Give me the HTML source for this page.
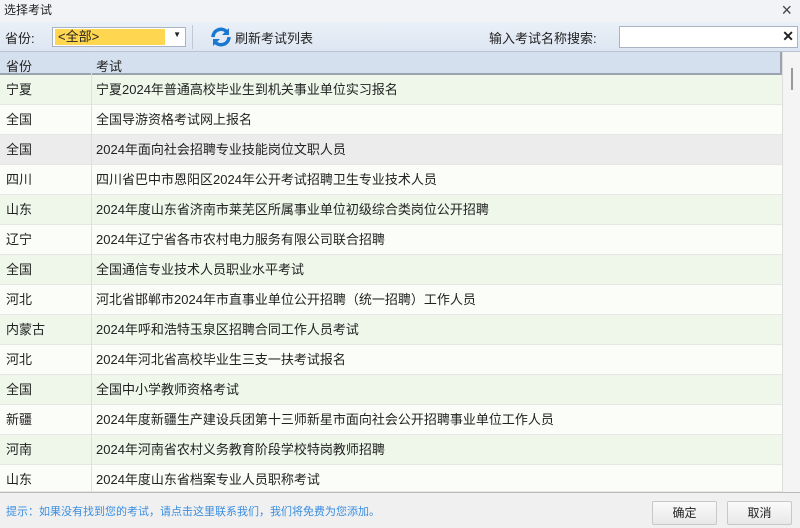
<!DOCTYPE html>
<html><head><meta charset="utf-8"><style>
*{margin:0;padding:0;box-sizing:border-box}
body{width:800px;height:528px;overflow:hidden;background:#f0f0f0;font-family:"Liberation Sans","Noto Sans CJK SC",sans-serif;font-size:13px;color:#222;position:relative}
.title{position:absolute;left:0;top:0;width:800px;height:22px;background:#f2f3f7;font-size:12px;line-height:20px;padding-left:4px}
.close{position:absolute;right:8px;top:0px;font-size:18px;color:#444;font-weight:300}
.tb{position:absolute;left:0;top:22px;width:800px;height:30px;background:linear-gradient(#eaf0f8,#dde6f2);border-bottom:1px solid #b8c4d4}
.abs{position:absolute}
.combo{left:52px;top:5px;width:134px;height:20px;border:1px solid #a8b4c4;background:#fff}
.combo .sel{position:absolute;left:2px;top:1px;width:110px;height:16px;background:#ffd64f;font-size:13px;line-height:16px;padding-left:3px}
.search{left:619px;top:4px;width:179px;height:22px;border:1px solid #a8b4c4;background:#fff}
.hdr{position:absolute;left:0;top:52px;width:782px;height:23px;background:#d5e0ef;border-bottom:2px solid #9aa4b0;border-right:2px solid #9aa4b0}
.row{position:absolute;left:0;width:782px;height:30px;border-bottom:1px solid #e6e6e6;line-height:29px;font-size:13px}
.c1{position:absolute;left:6px}
.c2{position:absolute;left:96px}
.div{position:absolute;left:91px;top:52px;width:1px;height:440px;background:#e0e0e0}
.sb{position:absolute;left:782px;top:52px;width:18px;height:440px;background:#f4f4f4;border-left:1px solid #ddd}
.foot{position:absolute;left:0;top:492px;width:800px;height:36px;background:#f0f0f0;border-top:1px solid #bbb}
.btn{position:absolute;top:8px;width:65px;height:24px;border:1px solid #c8c8c8;background:linear-gradient(#fafafa,#e8e8e8);text-align:center;line-height:22px;font-size:12px;border-radius:2px}
</style></head><body>
<div class="title">选择考试<span class="close">×</span></div>
<div class="tb">
 <div class="abs" style="left:5px;top:6px">省份:</div>
 <div class="abs combo"><div class="sel">&lt;全部&gt;</div><span class="abs" style="right:4px;top:2px;font-size:8px">▼</span></div>
 <div class="abs" style="left:192px;top:3px;width:1px;height:24px;background:#c0c8d4"></div>
 <svg class="abs" style="left:210px;top:4px" width="22" height="22" viewBox="0 0 22 22"><path d="M3 11a8 8 0 0 1 14-5" fill="none" stroke="#1a78d0" stroke-width="3.5"/><path d="M19 2v7h-7z" fill="#1a78d0"/><path d="M19 11a8 8 0 0 1-14 5" fill="none" stroke="#1a78d0" stroke-width="3.5"/><path d="M3 20v-7h7z" fill="#1a78d0"/></svg>
 <div class="abs" style="left:235px;top:6px">刷新考试列表</div>
 <div class="abs" style="left:489px;top:6px">输入考试名称搜索:</div>
 <div class="abs search"><span class="abs" style="right:3px;top:1px;font-weight:bold;font-size:14px">✕</span></div>
</div>
<div class="hdr"><span class="c1" style="top:4px">省份</span><span class="c2" style="top:4px">考试</span></div>
<div class="row" style="top:75px;background:#eef7e9"><span class="c1">宁夏</span><span class="c2">宁夏2024年普通高校毕业生到机关事业单位实习报名</span></div>
<div class="row" style="top:105px;background:#fbfdf9"><span class="c1">全国</span><span class="c2">全国导游资格考试网上报名</span></div>
<div class="row" style="top:135px;background:#ececec"><span class="c1">全国</span><span class="c2">2024年面向社会招聘专业技能岗位文职人员</span></div>
<div class="row" style="top:165px;background:#fbfdf9"><span class="c1">四川</span><span class="c2">四川省巴中市恩阳区2024年公开考试招聘卫生专业技术人员</span></div>
<div class="row" style="top:195px;background:#eef7e9"><span class="c1">山东</span><span class="c2">2024年度山东省济南市莱芜区所属事业单位初级综合类岗位公开招聘</span></div>
<div class="row" style="top:225px;background:#fbfdf9"><span class="c1">辽宁</span><span class="c2">2024年辽宁省各市农村电力服务有限公司联合招聘</span></div>
<div class="row" style="top:255px;background:#eef7e9"><span class="c1">全国</span><span class="c2">全国通信专业技术人员职业水平考试</span></div>
<div class="row" style="top:285px;background:#fbfdf9"><span class="c1">河北</span><span class="c2">河北省邯郸市2024年市直事业单位公开招聘（统一招聘）工作人员</span></div>
<div class="row" style="top:315px;background:#eef7e9"><span class="c1">内蒙古</span><span class="c2">2024年呼和浩特玉泉区招聘合同工作人员考试</span></div>
<div class="row" style="top:345px;background:#fbfdf9"><span class="c1">河北</span><span class="c2">2024年河北省高校毕业生三支一扶考试报名</span></div>
<div class="row" style="top:375px;background:#eef7e9"><span class="c1">全国</span><span class="c2">全国中小学教师资格考试</span></div>
<div class="row" style="top:405px;background:#fbfdf9"><span class="c1">新疆</span><span class="c2">2024年度新疆生产建设兵团第十三师新星市面向社会公开招聘事业单位工作人员</span></div>
<div class="row" style="top:435px;background:#eef7e9"><span class="c1">河南</span><span class="c2">2024年河南省农村义务教育阶段学校特岗教师招聘</span></div>
<div class="row" style="top:465px;background:#fbfdf9;height:27px"><span class="c1">山东</span><span class="c2">2024年度山东省档案专业人员职称考试</span></div>
<div class="div"></div>
<div class="sb"><div class="abs" style="left:8px;top:16px;width:2px;height:22px;background:#999"></div></div>
<div class="foot">
 <div class="abs" style="left:6px;top:10px;font-size:11px;color:#3a8ee0">提示：如果没有找到您的考试，请点击这里联系我们，我们将免费为您添加。</div>
 <div class="btn" style="left:652px">确定</div>
 <div class="btn" style="left:727px">取消</div>
</div>
</body></html>
